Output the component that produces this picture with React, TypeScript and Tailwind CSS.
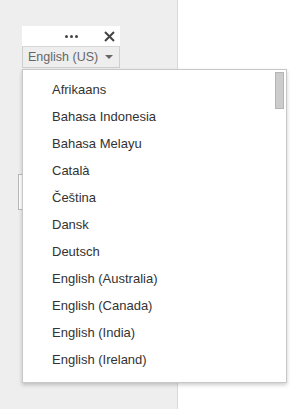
const LANGS = [
  'Afrikaans',
  'Bahasa Indonesia',
  'Bahasa Melayu',
  'Català',
  'Čeština',
  'Dansk',
  'Deutsch',
  'English (Australia)',
  'English (Canada)',
  'English (India)',
  'English (Ireland)',
  'English (New Zealand)',
];

export default function App() {
  return (
    <div className="relative flex h-[409px] w-[307px] overflow-hidden bg-white font-['Liberation_Sans',Arial,sans-serif]">
      <div className="h-full w-[178px] border-r border-[#d9d9d9] bg-[#eeeeee]" />

      {/* input edge peeking behind the menu */}
      <div className="absolute left-[18px] top-[174px] h-[36px] w-[20px] border border-[#b9b9b9] bg-white" />

      {/* language widget */}
      <div className="absolute left-[22px] top-[26px] w-[98px]">
        <div className="flex h-[21px] items-center justify-end border-b border-[#d6d6d6] bg-white pr-[5px]">
          <div className="mr-[26px] flex gap-[2px]">
            <span className="h-[3px] w-[3px] rounded-full bg-[#444]" />
            <span className="h-[3px] w-[3px] rounded-full bg-[#444]" />
            <span className="h-[3px] w-[3px] rounded-full bg-[#444]" />
          </div>
          <svg width="11" height="11" viewBox="0 0 11 11">
            <path d="M1 1 L10 10 M10 1 L1 10" stroke="#444" strokeWidth="2" />
          </svg>
        </div>
        <div className="flex h-[21px] items-center border border-t-0 border-[#cfcfcf] bg-[#eeeeee] pl-[5px] text-[12.5px] text-[#666]">
          <span>English (US)</span>
          <svg className="ml-[7px]" width="8" height="4" viewBox="0 0 8 4">
            <path d="M0 0 L8 0 L4 4 Z" fill="#666" />
          </svg>
        </div>
      </div>

      {/* dropdown list */}
      <div className="absolute left-[22px] top-[69px] h-[314px] w-[265px] overflow-hidden border border-[#c8c8c8] bg-white shadow-[0_2px_4px_rgba(0,0,0,0.2)]">
        <div className="pt-[6px]">
          {LANGS.map((l) => (
            <div key={l} className="flex h-[27px] items-center pl-[29px] text-[13px] text-[#333]">
              {l}
            </div>
          ))}
        </div>
        <div className="absolute right-[2px] top-[2px] h-[37px] w-[9px] border border-[#b5b5b5] bg-[#cccccc]" />
      </div>
    </div>
  );
}
